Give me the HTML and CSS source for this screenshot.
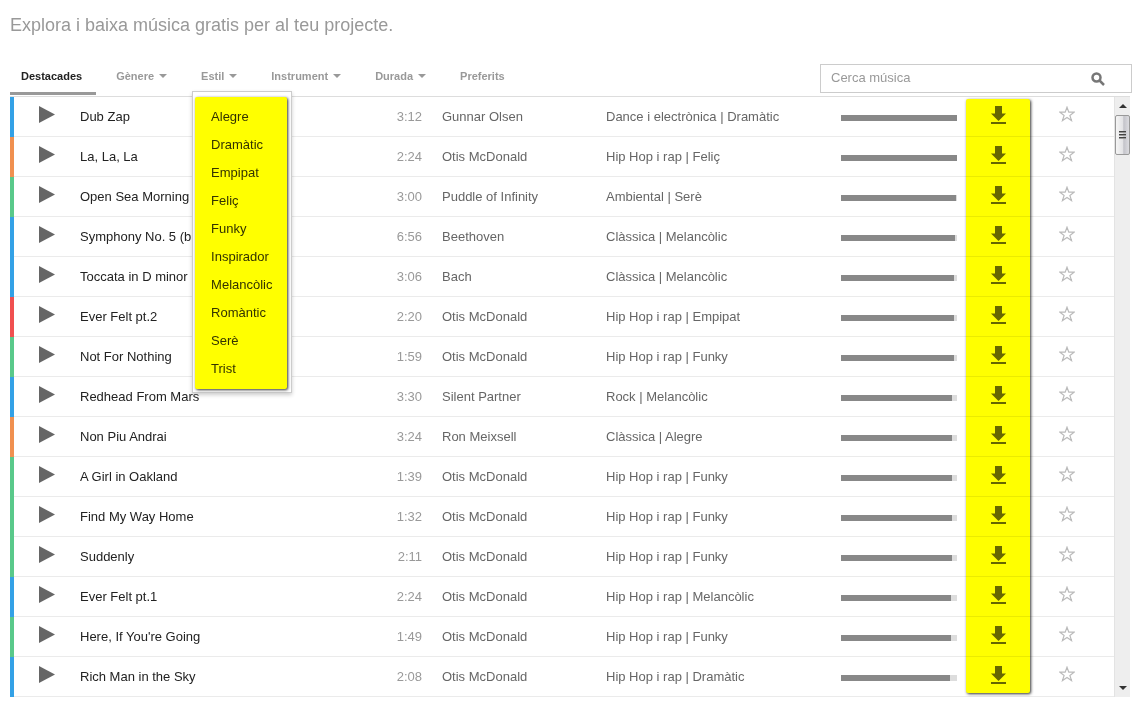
FILE: index.html
```html
<!DOCTYPE html>
<html lang="ca">
<head>
  <meta charset="UTF-8" />
  <meta name="viewport" content="width=device-width, initial-scale=1.0"/>
  <title>Biblioteca de música</title>
  <link rel="stylesheet" href="styles.css">
</head>
<body>

  <svg class="sprite" aria-hidden="true">
    <symbol id="play" viewBox="0 0 16 17"><path d="M0 0l16 8.500L0 17z"/></symbol>
    <symbol id="download" viewBox="0 0 15 18"><path d="M4 0h7v7.500h4L7.500 15 0 7.500h4zM0 16h15v2H0z"/></symbol>
    <symbol id="star" viewBox="0 0 16 16"><path d="M8 1.200l1.800 5h5.300l-4.200 3.200 1.600 5.200L8 11.500l-4.500 3.100 1.600-5.200L.9 6.200h5.300z"/></symbol>
  </svg>

  <main class="library">
    <h1 class="title">Explora i baixa música gratis per al teu projecte.</h1>

    <div class="toolbar">
      <nav class="tabs">
        <a href="#" class="tab active">Destacades</a>
        <button type="button" class="tab">Gènere <i class="caret"></i></button>
        <div class="tab-wrap">
          <button type="button" class="tab" aria-expanded="true">Estil <i class="caret"></i></button>
          <div class="menu">
            <ul class="menu-list">
              <li><a href="#">Alegre</a></li>
              <li><a href="#">Dramàtic</a></li>
              <li><a href="#">Empipat</a></li>
              <li><a href="#">Feliç</a></li>
              <li><a href="#">Funky</a></li>
              <li><a href="#">Inspirador</a></li>
              <li><a href="#">Melancòlic</a></li>
              <li><a href="#">Romàntic</a></li>
              <li><a href="#">Serè</a></li>
              <li><a href="#">Trist</a></li>
            </ul>
          </div>
        </div>
        <button type="button" class="tab">Instrument <i class="caret"></i></button>
        <button type="button" class="tab">Durada <i class="caret"></i></button>
        <a href="#" class="tab">Preferits</a>
      </nav>
      <form class="search">
        <input type="text" class="search-input" placeholder="Cerca música" aria-label="Cerca música">
        <button type="button" class="search-button" aria-label="Cerca">
          <svg width="14" height="14" viewBox="0 0 14 14"><circle cx="5.500" cy="5.500" r="4"/><path d="M8.500 8.500l4.500 4.500"/></svg>
        </button>
      </form>
    </div>

    <div class="list">
      <div class="tracks-wrap">
        <table class="tracks">
          <colgroup>
            <col class="col-play"><col class="col-name"><col class="col-time"><col class="col-artist">
            <col class="col-genre"><col class="col-bar"><col class="col-download"><col class="col-star">
          </colgroup>
          <tbody id="tracks"></tbody>
        </table>
        <div class="highlight"></div>
      </div>
      <div class="scrollbar">
        <button type="button" class="scroll-arrow" aria-label="Amunt"><i class="arrow-up"></i></button>
        <div class="thumb"><i class="grip"></i></div>
        <button type="button" class="scroll-arrow down" aria-label="Avall"><i class="arrow-down"></i></button>
      </div>
    </div>
  </main>

  <script src="script.js"></script>
</body>
</html>
```
FILE: styles.css
```css
* {
  margin: 0;
  padding: 0;
  box-sizing: border-box;
}

body {
  font-family: "Liberation Sans", Arial, sans-serif;
  font-size: 13px;
  color: #222;
  background: #fff;
}

a {
  color: inherit;
  text-decoration: none;
}

button {
  font: inherit;
  color: inherit;
  background: none;
  border: none;
  cursor: pointer;
}

.sprite {
  display: none;
}

.library {
  padding: 14px 15px 10px 10px;
}

.title {
  font-size: 18px;
  font-weight: normal;
  line-height: 22px;
  color: #999;
}

/* Tabs and search */
.toolbar {
  display: flex;
  justify-content: space-between;
  align-items: flex-start;
  height: 60px;
  padding-top: 28px;
}

.tabs {
  display: flex;
  gap: 9px;
}

.tab {
  display: flex;
  align-items: center;
  gap: 5px;
  height: 31px;
  padding: 0 14px 8px 11px;
  font-size: 11px;
  font-weight: bold;
  color: #999;
  white-space: nowrap;
}

.tab.active {
  color: #222;
  padding-bottom: 5px;
  border-bottom: 3px solid #999;
}

.caret {
  border: 4px solid transparent;
  border-top-color: #999;
  border-bottom: none;
}

.tab-wrap {
  position: relative;
}

.menu {
  position: absolute;
  top: 27px;
  left: 2px;
  z-index: 2;
  width: 100px;
  padding: 5px 4px 3px 2px;
  background: #fff;
  border: 1px solid #ccc;
  box-shadow: 0 2px 4px rgba(0, 0, 0, 0.2);
}

.menu-list {
  list-style: none;
  padding: 6px 0 6px 16px;
  background: #ff0;
  color: #333300;
  border-radius: 2px;
  box-shadow: 1px 1px 3px rgba(0, 0, 0, 0.8);
}

.menu-list a {
  display: block;
  line-height: 28px;
}

.search {
  display: flex;
  width: 312px;
  height: 29px;
  border: 1px solid #ccc;
}

.search-input {
  flex: 1;
  min-width: 0;
  padding: 0 10px 2px;
  font: inherit;
  border: none;
  outline: none;
}

.search-input::placeholder {
  color: #999;
  opacity: 1;
}

.search-button {
  width: 66px;
  line-height: 0;
}

.search-button svg {
  fill: none;
  stroke: #777;
  stroke-width: 2.500;
}

/* Track list */
.list {
  display: flex;
  margin-right: 2px;
  border-top: 1px solid #ddd;
}

.tracks-wrap {
  position: relative;
  flex: 1;
}

.tracks {
  width: 100%;
  table-layout: fixed;
  border-collapse: separate;
  border-spacing: 0;
}

.col-play { width: 70px; }
.col-time { width: 40px; }
.col-artist { width: 164px; }
.col-genre { width: 255px; }
.col-bar { width: 125px; }
.col-download { width: 64px; }
.col-star { width: 84px; }

.tracks tr {
  height: 40px;
  background: linear-gradient(#ebebeb, #ebebeb) bottom / 100% 1px no-repeat;
}

.tracks td {
  vertical-align: middle;
  white-space: nowrap;
  color: #666;
}

.tracks svg {
  display: block;
}

.tracks .play {
  padding-left: 25px;
  border-left: 4px solid #33a1e6;
}

.play svg {
  width: 16px;
  height: 17px;
  margin-bottom: 3px;
  fill: #666;
}

.tracks .orange .play { border-color: #f09050; }
.tracks .green .play { border-color: #59c98a; }
.tracks .red .play { border-color: #f05050; }

.tracks .name,
.tracks .time,
.tracks .artist,
.tracks .genre {
  padding-bottom: 2px;
}

.tracks .name {
  color: #222;
}

.tracks .time {
  color: #999;
  text-align: right;
}

.tracks .artist,
.tracks .genre {
  padding-left: 20px;
}

.bar {
  width: 116px;
  height: 6px;
  margin-top: 2px;
  background: #ddd;
}

.bar-fill {
  height: 6px;
  background: #888;
}

.download svg {
  width: 15px;
  height: 18px;
  margin: 0 auto 4px;
  fill: #666;
}

.star svg {
  width: 16px;
  height: 16px;
  margin: 0 0 4px 29px;
  fill: none;
  stroke: #bbb;
  stroke-width: 1.200;
}

.highlight {
  position: absolute;
  top: 2px;
  bottom: 4px;
  right: 84px;
  width: 64px;
  background: #ff0;
  border-radius: 2px;
  box-shadow: 1px 1px 3px rgba(0, 0, 0, 0.8);
  mix-blend-mode: multiply;
  pointer-events: none;
}

/* Scrollbar */
.scrollbar {
  display: flex;
  flex-direction: column;
  align-items: center;
  width: 16px;
  background: #eee;
  border-left: 1px solid #e3e3e3;
}

.scroll-arrow {
  display: flex;
  align-items: center;
  justify-content: center;
  width: 15px;
  height: 18px;
}

.scroll-arrow.down {
  margin-top: auto;
}

.arrow-up,
.arrow-down {
  border: 4px solid transparent;
}

.arrow-up {
  border-top: none;
  border-bottom-color: #333;
}

.arrow-down {
  border-bottom: none;
  border-top-color: #333;
}

.thumb {
  display: flex;
  align-items: center;
  justify-content: center;
  width: 15px;
  height: 40px;
  background: linear-gradient(90deg, #f5f5f5, #e4e4e6 50%, #c4c4ca 60%, #dcdce0);
  border: 1px solid #999;
  border-radius: 2px;
}

.grip {
  width: 7px;
  height: 8px;
  background: repeating-linear-gradient(#444 0 1px, #999 1px 2px, transparent 2px 3px);
}
```
FILE: script.js
```javascript
const tracks = [
  { color: 'blue', name: 'Dub Zap', time: '3:12', artist: 'Gunnar Olsen', genre: 'Dance i electrònica | Dramàtic', bar: 116 },
  { color: 'orange', name: 'La, La, La', time: '2:24', artist: 'Otis McDonald', genre: 'Hip Hop i rap | Feliç', bar: 116 },
  { color: 'green', name: 'Open Sea Morning', time: '3:00', artist: 'Puddle of Infinity', genre: 'Ambiental | Serè', bar: 115 },
  { color: 'blue', name: 'Symphony No. 5 (b', time: '6:56', artist: 'Beethoven', genre: 'Clàssica | Melancòlic', bar: 114 },
  { color: 'blue', name: 'Toccata in D minor', time: '3:06', artist: 'Bach', genre: 'Clàssica | Melancòlic', bar: 113 },
  { color: 'red', name: 'Ever Felt pt.2', time: '2:20', artist: 'Otis McDonald', genre: 'Hip Hop i rap | Empipat', bar: 113 },
  { color: 'green', name: 'Not For Nothing', time: '1:59', artist: 'Otis McDonald', genre: 'Hip Hop i rap | Funky', bar: 113 },
  { color: 'blue', name: 'Redhead From Mars', time: '3:30', artist: 'Silent Partner', genre: 'Rock | Melancòlic', bar: 111 },
  { color: 'orange', name: 'Non Piu Andrai', time: '3:24', artist: 'Ron Meixsell', genre: 'Clàssica | Alegre', bar: 111 },
  { color: 'green', name: 'A Girl in Oakland', time: '1:39', artist: 'Otis McDonald', genre: 'Hip Hop i rap | Funky', bar: 111 },
  { color: 'green', name: 'Find My Way Home', time: '1:32', artist: 'Otis McDonald', genre: 'Hip Hop i rap | Funky', bar: 111 },
  { color: 'green', name: 'Suddenly', time: '2:11', artist: 'Otis McDonald', genre: 'Hip Hop i rap | Funky', bar: 111 },
  { color: 'blue', name: 'Ever Felt pt.1', time: '2:24', artist: 'Otis McDonald', genre: 'Hip Hop i rap | Melancòlic', bar: 110 },
  { color: 'green', name: "Here, If You're Going", time: '1:49', artist: 'Otis McDonald', genre: 'Hip Hop i rap | Funky', bar: 110 },
  { color: 'blue', name: 'Rich Man in the Sky', time: '2:08', artist: 'Otis McDonald', genre: 'Hip Hop i rap | Dramàtic', bar: 109 }
];

document.getElementById('tracks').innerHTML = tracks.map(t => `
  <tr class="${t.color}">
    <td class="play"><button type="button" aria-label="Reprodueix"><svg><use href="#play"/></svg></button></td>
    <td class="name">${t.name}</td>
    <td class="time">${t.time}</td>
    <td class="artist">${t.artist}</td>
    <td class="genre">${t.genre}</td>
    <td><div class="bar"><div class="bar-fill" style="width: ${t.bar}px"></div></div></td>
    <td class="download"><a href="#" aria-label="Baixa"><svg><use href="#download"/></svg></a></td>
    <td class="star"><button type="button" aria-label="Preferit"><svg><use href="#star"/></svg></button></td>
  </tr>`).join('');
```
